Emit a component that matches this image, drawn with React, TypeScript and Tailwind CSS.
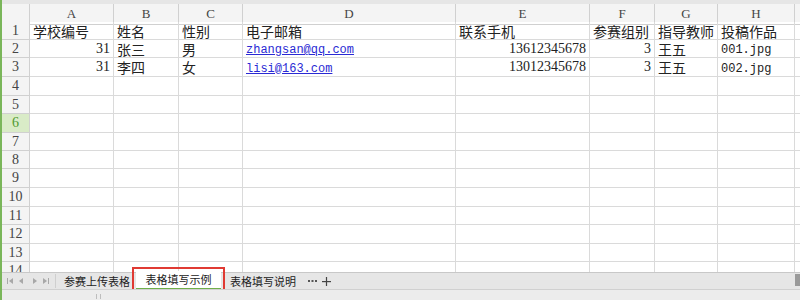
import React from "react";

const rowHeights = [
  "h-[18px]", "h-[18px]", "h-[19px]", "h-[19px]", "h-[18px]", "h-[19px]", "h-[18px]",
  "h-[18px]", "h-[19px]", "h-[19px]", "h-[18px]", "h-[19px]", "h-[18px]", "h-[18px]",
];

const gridCols =
  "grid grid-cols-[28px_84px_65px_64px_213px_134px_65px_63px_77px_1fr]";

type Cell = { t: string; kind?: "num" | "link" | "mono" | "cjk" };

const data: Cell[][] = [
  [
    { t: "学校编号" }, { t: "姓名" }, { t: "性别" }, { t: "电子邮箱" },
    { t: "联系手机" }, { t: "参赛组别" }, { t: "指导教师" }, { t: "投稿作品" },
  ],
  [
    { t: "31", kind: "num" }, { t: "张三" }, { t: "男" },
    { t: "zhangsan@qq.com", kind: "link" }, { t: "13612345678", kind: "num" },
    { t: "3", kind: "num" }, { t: "王五" }, { t: "001.jpg", kind: "mono" },
  ],
  [
    { t: "31", kind: "num" }, { t: "李四" }, { t: "女" },
    { t: "lisi@163.com", kind: "link" }, { t: "13012345678", kind: "num" },
    { t: "3", kind: "num" }, { t: "王五" }, { t: "002.jpg", kind: "mono" },
  ],
];

const letters = ["A", "B", "C", "D", "E", "F", "G", "H"];

function DataCell({ c }: { c?: Cell }) {
  const base = "border-r border-b border-[#dadada] flex items-center overflow-hidden whitespace-nowrap";
  if (!c) return <div className={base} />;
  if (c.kind === "num")
    return (
      <div className={`${base} justify-end pr-[3px] text-[14px] leading-[16px] text-[#222] font-['Liberation_Serif',serif]`}>
        {c.t}
      </div>
    );
  if (c.kind === "link")
    return (
      <div className={`${base} pl-[3px] pt-[3px] text-[12px] leading-[14px] text-[#2a2ad4] underline font-['Liberation_Mono',monospace]`}>
        {c.t}
      </div>
    );
  if (c.kind === "mono")
    return (
      <div className={`${base} pl-[3px] pt-[3px] text-[12px] leading-[14px] text-[#222] font-['Liberation_Mono',monospace]`}>
        {c.t}
      </div>
    );
  return (
    <div className={`${base} pl-[3px] text-[14px] leading-[16px] text-[#222] font-['Noto_Sans_CJK_SC',sans-serif]`}>
      {c.t}
    </div>
  );
}

function NavArrows() {
  return (
    <svg width="46" height="10" viewBox="0 0 46 10" className="ml-[4px]">
      <g fill="#a8a8a8">
        <rect x="1" y="2" width="1" height="6" />
        <polygon points="7,2 7,8 3,5" />
        <polygon points="17,2 17,8 13,5" />
        <polygon points="27,2 27,8 31,5" />
        <polygon points="37,2 37,8 41,5" />
        <rect x="42" y="2" width="1" height="6" />
      </g>
    </svg>
  );
}

export default function App() {
  return (
    <div className="w-[800px] h-[300px] overflow-hidden flex flex-col bg-white border-l-2 border-[#7ab65a]">
      <div className="h-[4px] bg-[#e6e6e6] shrink-0" />
      <div className="h-[268px] overflow-hidden shrink-0">
        {/* header row */}
        <div className={`${gridCols} h-[18px] bg-[#f4f4f4]`}>
          <div className="border-r border-b border-[#d0d0d0]" />
          {letters.map((l) => (
            <div
              key={l}
              className="border-r border-b border-[#d0d0d0] flex items-center justify-center text-[13px] text-[#444] font-['Liberation_Serif',serif]"
            >
              {l}
            </div>
          ))}
          <div className="border-b border-[#d0d0d0]" />
        </div>
        {rowHeights.map((h, i) => {
          const row = data[i];
          const selected = i === 5;
          return (
            <div key={i} className={`${gridCols} ${h}`}>
              <div
                className={
                  selected
                    ? "border-r border-b border-[#d0d0d0] bg-[#d9ebc7] flex items-center justify-center text-[14px] leading-[16px] text-[#4f9a2f] font-['Liberation_Serif',serif]"
                    : "border-r border-b border-[#d0d0d0] bg-[#f4f4f4] flex items-center justify-center text-[14px] leading-[16px] text-[#444] font-['Liberation_Serif',serif]"
                }
              >
                {i + 1}
              </div>
              {letters.map((_, j) => (
                <DataCell key={j} c={row ? row[j] : undefined} />
              ))}
              <div className="border-b border-[#dadada]" />
            </div>
          );
        })}
      </div>
      {/* tab bar */}
      <div className="h-[17px] shrink-0 bg-[#e6e6e6] border-t border-[#c8c8c8] flex items-center relative font-['Noto_Sans_CJK_SC',sans-serif]">
        <NavArrows />
        <div className="w-px h-[14px] bg-[#cfcfcf] ml-[3px]" />
        <div className="ml-[8px] text-[11px] text-[#222] leading-none">参赛上传表格</div>
        <div className="ml-[2px] h-[26px] w-[93px] border-2 border-[#e03a33] self-start -mt-[6px] flex items-center justify-center bg-transparent">
          <div className="mt-[1px] h-[19px] w-[85px] bg-white border-b-2 border-[#6fb04a] flex items-center justify-center text-[11px] text-[#222] leading-none">
            表格填写示例
          </div>
        </div>
        <div className="ml-[5px] text-[11px] text-[#222] leading-none">表格填写说明</div>
        <svg width="9" height="4" viewBox="0 0 9 4" className="ml-[12px]">
          <g fill="#555">
            <rect x="0" y="1" width="2" height="2" />
            <rect x="3.5" y="1" width="2" height="2" />
            <rect x="7" y="1" width="2" height="2" />
          </g>
        </svg>
        <svg width="9" height="9" viewBox="0 0 9 9" className="ml-[5px]">
          <g fill="#444">
            <rect x="0" y="4" width="9" height="1.2" />
            <rect x="3.9" y="0" width="1.2" height="9" />
          </g>
        </svg>
        <div className="ml-auto w-[5px] h-[12px] bg-[#9a9a9a] self-start mt-[1px]" />
      </div>
      <div className="flex-1 bg-[#ececec] border-t border-[#d0d0d0] relative">
        <div className="ml-[94px] mt-[4px] w-[5px] h-[5px] border-l border-r border-[#bdbdbd]" />
      </div>
    </div>
  );
}
